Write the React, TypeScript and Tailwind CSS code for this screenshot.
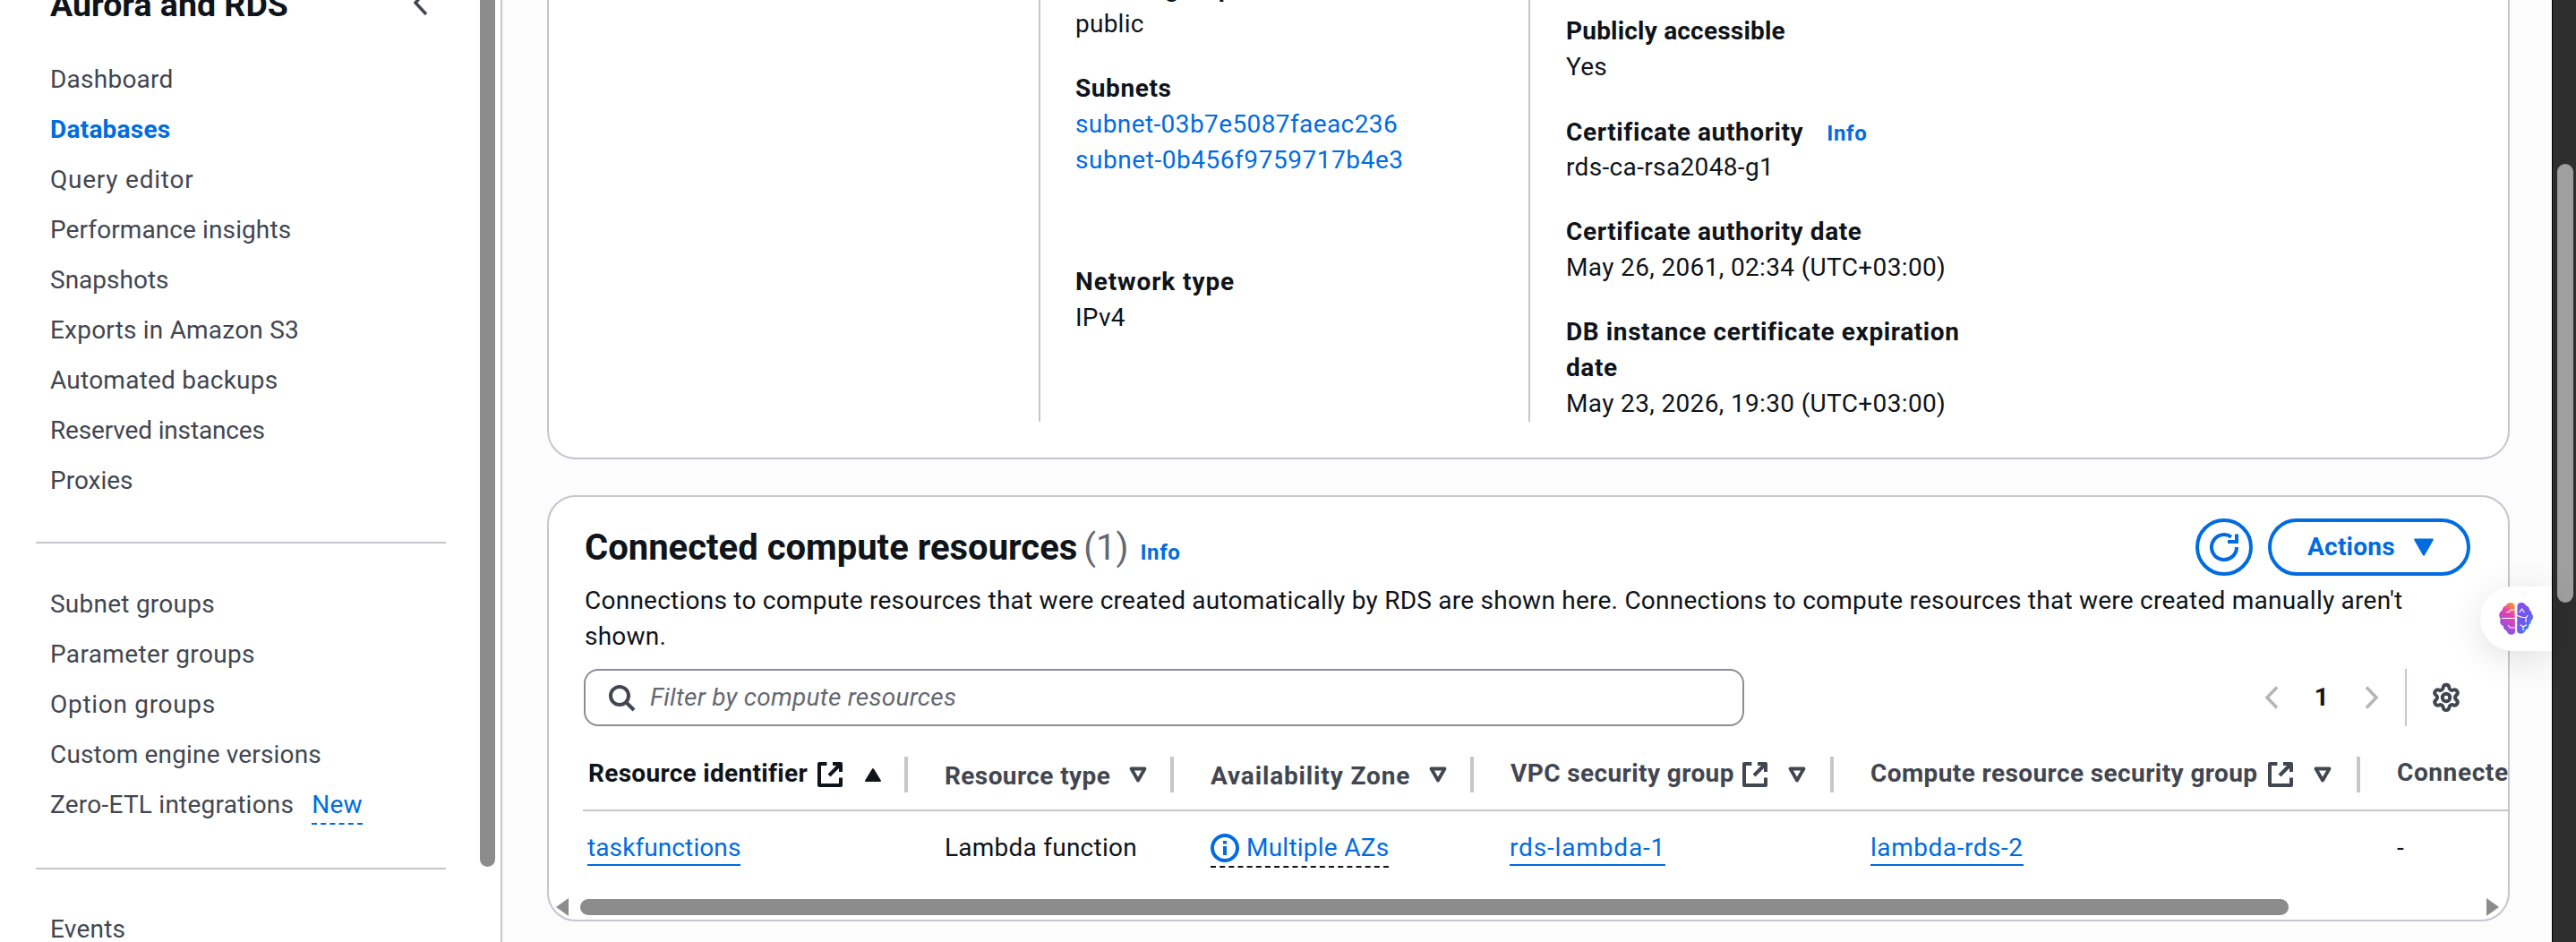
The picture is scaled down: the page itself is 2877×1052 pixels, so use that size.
import React from "react";
import { Settings } from "lucide-react";

const linkCls = "text-[#006ce0]";

function ExtIcon({ color }: { color: string }) {
  return (
    <svg viewBox="0 0 16 16" className="w-[32px] h-[32px] shrink-0 -mx-[3px]" fill="none" stroke={color} strokeWidth="2" strokeLinejoin="round">
      <path d="M6.2 2H2v12h12V9.8" />
      <path d="M9.5 2H14v4.5" />
      <path d="M14 2 7.5 8.5" />
    </svg>
  );
}

function CaretDown() {
  return (
    <svg viewBox="0 0 20 20" className="w-[20px] h-[20px] shrink-0" fill="none" stroke="#424650" strokeWidth="3.8" strokeLinejoin="round">
      <path d="M2.500 3.500h15L10 16.500z" />
    </svg>
  );
}

function HeadCell({ first, text, textW, color, ext, ml, lowered, divider = true, sorted, track = "tracking-[0.4px]" }: { first?: boolean; text: string; textW: number; color: string; ext?: boolean; ml: string; lowered?: boolean; divider?: boolean; sorted?: boolean; track?: string }) {
  return (
    <div className={first ? "flex items-center h-[40px] pl-[6px]" : "flex items-center h-[40px] pl-[41px]"}>
      <span className={(lowered ? "font-bold whitespace-nowrap shrink-0 pt-[3px] " : "font-bold whitespace-nowrap shrink-0 -mt-[2px] ") + track} style={{ width: textW, color }}>{text}</span>
      {ext && <ExtIcon color={color} />}
      {sorted ? (
        <svg viewBox="0 0 20 20" className={"w-[20px] h-[20px] shrink-0 " + ml} fill="#0f141a" stroke="#0f141a" strokeWidth="2" strokeLinejoin="round">
          <path d="M10 4 18 17H2z" />
        </svg>
      ) : (
        divider && <span className={"flex shrink-0 " + ml}><CaretDown /></span>
      )}
      {divider && <span className="ml-auto w-[4px] h-[40px] bg-[#c6c6cd] shrink-0" />}
    </div>
  );
}

function Brain() {
  return (
    <svg viewBox="0 0 38 36" className="w-[38px] h-[36px]" fill="none">
      <defs>
        <linearGradient id="brainLeft" x1="0.8" y1="0" x2="0.4" y2="1">
          <stop offset="0" stopColor="#f59a23" />
          <stop offset="0.35" stopColor="#ec3fb0" />
          <stop offset="1" stopColor="#7a55ee" />
        </linearGradient>
        <linearGradient id="brainRight" x1="0.1" y1="0" x2="0.8" y2="1">
          <stop offset="0" stopColor="#8a4be8" />
          <stop offset="0.6" stopColor="#6a5cf0" />
          <stop offset="1" stopColor="#1e9bf5" />
        </linearGradient>
      </defs>
      <path fill="url(#brainLeft)" d="M17.500 3.500C17.500 1.500 15.500 0 13 0 10.500 0 8.500 1.300 7.800 3.400 5.200 3.800 3.800 5.800 4 8.200 1.600 9.400.2 11.500.2 14c0 1.800.7 3.400 1.800 4.600C1 20 .9 21.600 1.600 23.200c.7 1.500 1.800 2.500 3.200 2.900-.1 2.600 1.300 4.700 3.700 5.300.8 2.600 2.800 4.300 5.400 4.300 2.400 0 3.900-1.300 4.200-3.400z" />
      <path fill="url(#brainRight)" d="M20.500 3.500C20.500 1.500 22.500 0 25 0c2.500 0 4.500 1.300 5.200 3.400 2.600.4 4 2.400 3.800 4.800 1.800 1 2.500 2.600 2.500 4.400 1 .8 1.500 2 1.500 3.400 0 1.800-.8 3.300-2.200 4.200.1 2-.8 3.600-2.300 4.600.2 2.800-1.300 5-3.800 5.600-.8 2.600-2.800 4.300-5.400 4.300-2.400 0-3.900-1.300-4.200-3.400z" />
      <g stroke="#ffffff" strokeWidth="1.200" strokeLinecap="round" strokeLinejoin="round">
        <path d="M17.500 8H13l-2 2.500H8.500" />
        <path d="M17.500 17.500H3.500" />
        <path d="M17.500 28H12.500l-2-2.500" />
        <path d="M25.500 7 23 10.500M25.500 7l2.500 3.500" />
        <path d="M20.500 14.500 26 16.500h4.500l1.500-2M30 16.500v5" />
        <path d="M24 25l3 2 3.500-2M27 27v3.500" />
      </g>
    </svg>
  );
}

const nav1: [string, string][] = [
  ["Query editor", "tracking-[0.77px]"],
  ["Performance insights", "tracking-[0.1px]"],
  ["Snapshots", "tracking-[0px]"],
  ["Exports in Amazon S3", "tracking-[0.2px]"],
  ["Automated backups", "tracking-[0.24px]"],
  ["Reserved instances", "tracking-[-0.16px]"],
  ["Proxies", "tracking-[0px]"],
];
const nav2: [string, string][] = [
  ["Subnet groups", "tracking-[0.24px]"],
  ["Parameter groups", "tracking-[0.35px]"],
  ["Option groups", "tracking-[0.7px]"],
  ["Custom engine versions", "tracking-[0.16px]"],
];
const colsCls = "grid grid-cols-[363px_297px_335px_402px_588px_400px]";

function Pair({ label, children, cls, labelCls }: { label: React.ReactNode; children: React.ReactNode; cls?: string; labelCls?: string }) {
  return (
    <div className={cls}>
      <div className={"font-bold " + (labelCls ?? "tracking-[0.6px]")}>{label}</div>
      <div>{children}</div>
    </div>
  );
}

export default function App() {
  return (
    <div className="relative flex w-[2877px] h-[1052px] overflow-hidden bg-white font-['Roboto',sans-serif] text-[28px] leading-[40px] tracking-[0.24px] text-[#0f141a]">
      <aside className="flex w-[559px] shrink-0 h-full">
        <nav className="w-[536px] shrink-0 pl-[56px] text-[#424650]">
          <div className="-mt-[17px] h-[44px] flex items-center justify-between pr-[58px]">
            <span className="text-[37.5px] leading-[44px] font-bold tracking-normal text-[#0f141a]">Aurora and RDS</span>
            <svg viewBox="0 0 16 28" className="w-[16px] h-[28px] -mt-[4px]" fill="none" stroke="#424650" strokeWidth="3.500"><path d="M14 1 2 14l12 13" /></svg>
          </div>
          <div className="mt-[42px] flex flex-col gap-[16px]">
            <div>Dashboard</div>
            <div className="font-bold text-[#006ce0]">Databases</div>
            {nav1.map(([t, c]) => <div key={t} className={c}>{t}</div>)}
          </div>
          <div className="mt-[48px] -ml-[16px] w-[458px] h-[2px] bg-[#c6c6cd]" />
          <div className="mt-[48px] flex flex-col gap-[16px]">
            {nav2.map(([t, c]) => <div key={t} className={c}>{t}</div>)}
            <div className="flex items-start">
              <span>Zero-ETL integrations</span>
              <span className={"ml-[20px] h-[42px] border-b-2 border-dashed border-[#006ce0] " + linkCls}>New</span>
            </div>
          </div>
          <div className="mt-[48px] -ml-[16px] w-[458px] h-[2px] bg-[#c6c6cd]" />
          <div className="mt-[47px]">Events</div>
        </nav>
        <div className="w-[17px] h-[968px] bg-[#8c8c8c] rounded-b-[9px] shrink-0" />
      </aside>

      <main className="flex-1 min-w-0 h-full border-l-2 border-[#c6c6cd] bg-[#fcfcfc] pl-[50px] pr-[47px]">
        <section className="-mt-[100px] rounded-[32px] border-2 border-[#c6c6cd] bg-white pb-[40px] grid grid-cols-[547px_547px_1fr]">
          <div />
          <div className="border-l-2 border-[#c6c6cd] pl-[39px] pt-[65px] h-[569px] flex flex-col">
            <Pair label="Subnet group">public</Pair>
            <Pair label="Subnets" cls="mt-[32px]">
              <div className={"tracking-[0.4px] " + linkCls}>subnet-03b7e5087faeac236</div>
              <div className={"tracking-[0.55px] " + linkCls}>subnet-0b456f9759717b4e3</div>
            </Pair>
            <Pair label="Network type" labelCls="tracking-[0.9px]" cls="mt-[96px]">IPv4</Pair>
          </div>
          <div className="border-l-2 border-[#c6c6cd] pl-[40px] pt-[113px] h-[569px] flex flex-col gap-[32px]">
            <Pair label="Publicly accessible" labelCls="tracking-[0.2px]">Yes</Pair>
            <Pair label={<span className="flex items-center">Certificate authority<span className="ml-[26px] text-[24px] text-[#006ce0] pt-[2px]">Info</span></span>}><div className="-mt-[2px] tracking-[0.35px]">rds-ca-rsa2048-g1</div></Pair>
            <Pair label="Certificate authority date"><span className="tracking-[0.35px]">May 26, 2061, 02:34 (UTC+03:00)</span></Pair>
            <Pair label={<span className="block w-[470px]">DB instance certificate expiration date</span>}><span className="tracking-[0.35px]">May 23, 2026, 19:30 (UTC+03:00)</span></Pair>
          </div>
        </section>

        <section className="mt-[40px] rounded-[32px] border-2 border-[#c6c6cd] bg-white overflow-hidden h-[476px]">
          <div className="pl-[40px] pr-[42px] pt-[24px]">
            <div className="flex items-center justify-between h-[64px]">
              <div className="flex items-center pt-[1px]">
                <span className="text-[40px] leading-[44px] font-bold tracking-normal">Connected compute resources</span>
                <span className="ml-[7px] text-[40px] leading-[44px] tracking-normal text-[#656871]">(1)</span>
                <span className="ml-[13px] text-[24px] font-bold tracking-[0.6px] text-[#006ce0] pt-[10px]">Info</span>
              </div>
              <div className="flex items-center gap-[17px]">
                <button className="w-[64px] h-[64px] rounded-full border-4 border-[#006ce0] flex items-center justify-center">
                  <svg viewBox="0 0 16 16" className="w-[32px] h-[32px]" fill="none" stroke="#006ce0" strokeWidth="2">
                    <path d="M15 8a7 7 0 1 1-3-5.700" />
                    <path d="M15 .7V5h-5" />
                  </svg>
                </button>
                <button className="w-[226px] h-[64px] rounded-full border-4 border-[#006ce0] flex items-center pl-[40px] font-bold text-[#006ce0]">
                  Actions
                  <svg viewBox="0 0 20 20" className="w-[24px] h-[24px] ml-[20px]" fill="#006ce0" stroke="#006ce0" strokeWidth="2" strokeLinejoin="round"><path d="M2 3h16L10 17z" /></svg>
                </button>
              </div>
            </div>
            <p className="mt-[8px] whitespace-nowrap">
              Connections to compute resources that were created automatically by RDS are shown here. Connections to compute resources that were created manually aren't<br />shown.
            </p>
            <div className="mt-[16px] flex items-center h-[64px]">
              <div className="w-[1296px] h-[64px] rounded-[16px] border-2 border-[#8c8c94] flex items-center pl-[24px] bg-white -ml-[1px]">
                <svg viewBox="0 0 16 16" className="w-[32px] h-[32px] shrink-0" fill="none" stroke="#424650" strokeWidth="2">
                  <circle cx="7" cy="7" r="5" />
                  <path d="m10.500 10.500 4.500 4.500" />
                </svg>
                <span className="ml-[16px] italic text-[#656871]">Filter by compute resources</span>
              </div>
              <div className="ml-auto flex items-center h-[64px]">
                <svg viewBox="0 0 16 26" className="w-[16px] h-[26px]" fill="none" stroke="#b4b4bb" strokeWidth="3.500"><path d="M14 1.500 3 13l11 11.500" /></svg>
                <span className="w-[96px] text-center font-bold">1</span>
                <svg viewBox="0 0 16 26" className="w-[16px] h-[26px]" fill="none" stroke="#b4b4bb" strokeWidth="3.500"><path d="M2 1.500 13 13 2 24.500" /></svg>
                <span className="ml-[29px] w-[2px] h-[64px] bg-[#c6c6cd]" />
                <Settings className="ml-[27px] mr-[10px] w-[34px] h-[34px] text-[#424650]" strokeWidth={2.800} />
              </div>
            </div>
          </div>

          <div className="pl-[38px] mt-[34px] overflow-hidden">
            <div className={colsCls + " pb-[19px] whitespace-nowrap"}>
              <HeadCell first text="Resource identifier" textW={257} color="#0f141a" ext sorted ml="ml-[25px]" track="tracking-[0.3px]" />
              <HeadCell text="Resource type" textW={206} color="#424650" lowered ml="" />
              <HeadCell text="Availability Zone" textW={244} color="#424650" lowered ml="" track="tracking-[0.85px]" />
              <HeadCell text="VPC security group" textW={260} color="#424650" ext ml="ml-[24px]" />
              <HeadCell text="Compute resource security group" textW={445} color="#424650" ext ml="ml-[24px]" />
              <div className="flex items-center h-[40px] pl-[41px] -mt-[2px] font-bold tracking-[0.6px] text-[#424650]">Connected function</div>
            </div>
            <div className="h-[2px] bg-[#c6c6cd]" />
            <div className={colsCls + " h-[98px] pt-[21px] whitespace-nowrap"}>
              <div className="pl-[5px]"><span className={"inline-block leading-[36px] border-b-2 border-[#006ce0] tracking-[0.1px] " + linkCls}>taskfunctions</span></div>
              <div className="pl-[41px]">Lambda function</div>
              <div className="pl-[41px]">
                <span className="inline-flex items-center h-[42px] border-b-2 border-dashed border-[#0f141a]">
                  <svg viewBox="0 0 16 16" className="w-[32px] h-[32px] shrink-0" fill="none" stroke="#006ce0" strokeWidth="2">
                    <circle cx="8" cy="8" r="7" />
                    <path d="M8 12V7" />
                    <path d="M8 4v1.800" />
                  </svg>
                  <span className={"ml-[8px] " + linkCls}>Multiple AZs</span>
                </span>
              </div>
              <div className="pl-[40px]"><span className={"inline-block leading-[36px] border-b-2 border-[#006ce0] tracking-[0.84px] " + linkCls}>rds-lambda-1</span></div>
              <div className="pl-[41px]"><span className={"inline-block leading-[36px] border-b-2 border-[#006ce0] tracking-[0.55px] " + linkCls}>lambda-rds-2</span></div>
              <div className="pl-[41px]">-</div>
            </div>
          </div>
          <div className="flex items-center h-[18px] pl-[8px] pr-[10px]">
            <svg viewBox="0 0 14 20" className="w-[14px] h-[20px] shrink-0" fill="#8c8c8c"><path d="M14 0v20L0 10z" /></svg>
            <div className="ml-[13px] w-[1908px] h-[18px] rounded-[9px] bg-[#8c8c8c]" />
            <svg viewBox="0 0 14 20" className="ml-auto w-[14px] h-[20px] shrink-0" fill="#8c8c8c"><path d="M0 0v20l14-10z" /></svg>
          </div>
        </section>
      </main>

      <div className="w-[27px] shrink-0 h-full bg-[#2e2e2e] border-l border-black pl-[5px] pt-[183px]">
        <div className="w-[18px] h-[490px] rounded-full bg-[#9f9f9f]" />
      </div>

      <div className="absolute left-[2770px] top-[655px] w-[80px] h-[72px] rounded-l-[36px] bg-white shadow-[0_8px_40px_rgba(0,0,0,0.12)] flex items-center pl-[21px]">
        <Brain />
      </div>
    </div>
  );
}
